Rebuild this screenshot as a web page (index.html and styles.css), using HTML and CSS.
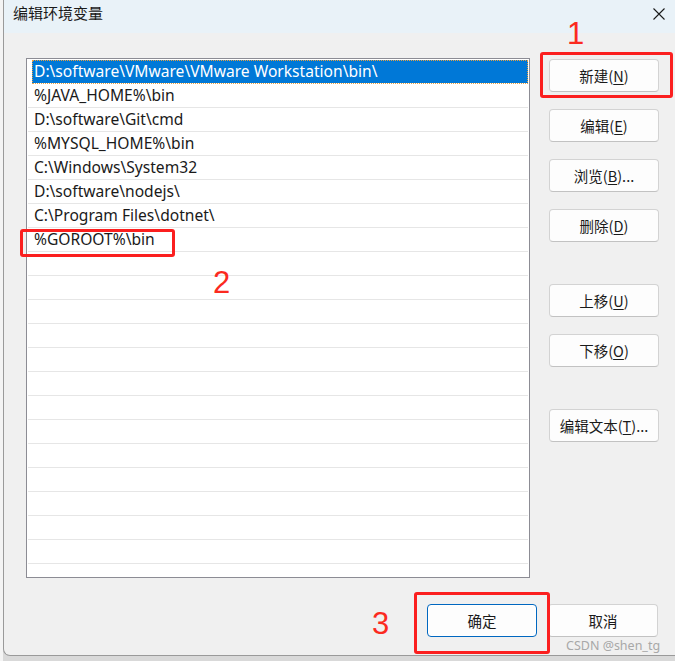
FILE: index.html
```html
<!DOCTYPE html>
<html lang="zh-CN">
<head>
<meta charset="utf-8">
<title>编辑环境变量</title>
<link rel="stylesheet" href="styles.css">
</head>
<body>
<div class="backdrop"></div>
<div class="window">
  <div class="titlebar">
    <span class="title">编辑环境变量</span>
    <svg class="close" width="12" height="12" viewBox="0 0 12 12"><path d="M0.5 0.5 L11.5 11.5 M11.5 0.5 L0.5 11.5" stroke="#1a1a1a" stroke-width="1.1" fill="none"/></svg>
  </div>
  <div class="main">
    <div class="list">
      <div class="row selected">D:\software\VMware\VMware Workstation\bin\</div>
      <div class="row">%JAVA_HOME%\bin</div>
      <div class="row">D:\software\Git\cmd</div>
      <div class="row">%MYSQL_HOME%\bin</div>
      <div class="row">C:\Windows\System32</div>
      <div class="row">D:\software\nodejs\</div>
      <div class="row">C:\Program Files\dotnet\</div>
      <div class="row">%GOROOT%\bin</div>
      <div class="row"></div><div class="row"></div><div class="row"></div><div class="row"></div>
      <div class="row"></div><div class="row"></div><div class="row"></div><div class="row"></div>
      <div class="row"></div><div class="row"></div><div class="row"></div><div class="row"></div>
      <div class="row"></div><div class="row"></div>
    </div>
    <div class="side">
      <button class="btn">新建(<u>N</u>)</button>
      <button class="btn">编辑(<u>E</u>)</button>
      <button class="btn">浏览(<u>B</u>)...</button>
      <button class="btn">删除(<u>D</u>)</button>
      <button class="btn gap-top">上移(<u>U</u>)</button>
      <button class="btn">下移(<u>O</u>)</button>
      <button class="btn gap-top">编辑文本(<u>T</u>)...</button>
    </div>
  </div>
  <div class="footer">
    <button class="btn primary">确定</button>
    <button class="btn">取消</button>
  </div>
</div>

<div class="mark box-new"></div>
<div class="mark box-goroot"></div>
<div class="mark box-ok"></div>
<span class="num num1">1</span>
<span class="num num2">2</span>
<span class="num num3">3</span>
<span class="watermark">CSDN @shen_tg</span>
</body>
</html>
```
FILE: styles.css
```css
html, body {
  margin: 0;
  padding: 0;
}
body {
  width: 675px;
  height: 661px;
  overflow: hidden;
  position: relative;
  background: #d9d9d9;
  font-family: "Noto Sans", "Noto Sans CJK SC", sans-serif;
  color: #1a1a1a;
}
.backdrop {
  position: absolute;
  left: 0;
  top: 0;
  width: 3px;
  height: 661px;
  background: #f4f4f4;
}
.window {
  position: absolute;
  left: 3px;
  top: 0;
  width: 680px;
  height: 656px;
  background: #f0f0f0;
  border-left: 1px solid #9a9a9a;
  border-bottom: 1px solid #9a9a9a;
  border-bottom-left-radius: 7px;
  box-sizing: border-box;
}
.titlebar {
  height: 33px;
  background: #e9f2f8;
  display: flex;
  align-items: center;
  justify-content: space-between;
  padding: 0 20px 7px 9px;
  box-sizing: border-box;
}
.title {
  font-family: "Noto Sans CJK SC", sans-serif;
  font-size: 15px;
  line-height: 20px;
  color: #1a1a1a;
}
.close {
  margin-top: 2px;
  margin-right: -2px;
}
.main {
  display: flex;
  padding: 25px 0 0 22px;
  gap: 19px;
}
.list {
  width: 504px;
  height: 520px;
  box-sizing: border-box;
  border: 1px solid #8c8c94;
  background: #fff;
  padding: 1px 1px 0 1px;
  overflow: hidden;
}
.row {
  height: 23px;
  border-bottom: 1px solid #e6e6e6;
  font-size: 15.6px;
  line-height: 23px;
  padding-left: 6px;
  white-space: nowrap;
  color: #1a1a1a;
}
.row.selected {
  background: #0078d7;
  color: #fff;
  outline: 1px dotted #e8a040;
  outline-offset: -1px;
  margin-left: 4px;
  padding-left: 2px;
  border-bottom-color: #fff;
}
.side {
  display: flex;
  flex-direction: column;
  gap: 17px;
  padding-top: 1px;
}
.btn {
  width: 110px;
  height: 33px;
  box-sizing: border-box;
  background: #fdfdfd;
  border: 1px solid #d3d3d3;
  border-bottom-color: #c2c2c2;
  border-radius: 4px;
  font-family: "Noto Sans CJK SC", sans-serif;
  font-size: 14.5px;
  color: #1a1a1a;
  padding: 0;
  line-height: 20px;
}
.btn u {
  text-underline-offset: 2px;
}
.gap-top {
  margin-top: 25px;
}
.footer {
  display: flex;
  justify-content: flex-start;
  gap: 11px;
  padding-left: 423px;
  margin-top: 26px;
}
.btn.primary {
  border: 1px solid #0067c0;
  box-shadow: inset 0 0 0 1px #ffffff;
}
.mark {
  position: absolute;
  border: 3px solid #fb1f1f;
  border-radius: 3px;
  box-sizing: border-box;
}
.box-new {
  left: 540px;
  top: 52px;
  width: 133px;
  height: 46px;
}
.box-goroot {
  left: 20px;
  top: 229px;
  width: 155px;
  height: 28px;
}
.box-ok {
  left: 414px;
  top: 592px;
  width: 136px;
  height: 62px;
}
.num {
  position: absolute;
  font-family: "Liberation Sans", sans-serif;
  font-size: 31px;
  line-height: 30px;
  color: #fb2a1f;
}
.num1 { left: 567px; top: 19px; }
.num2 { left: 213px; top: 268px; }
.num3 { left: 372px; top: 609px; }
.watermark {
  position: absolute;
  left: 566px;
  top: 638px;
  font-family: "Noto Sans", sans-serif;
  font-size: 12.5px;
  color: #a8a8a8;
  line-height: 16px;
}
```
